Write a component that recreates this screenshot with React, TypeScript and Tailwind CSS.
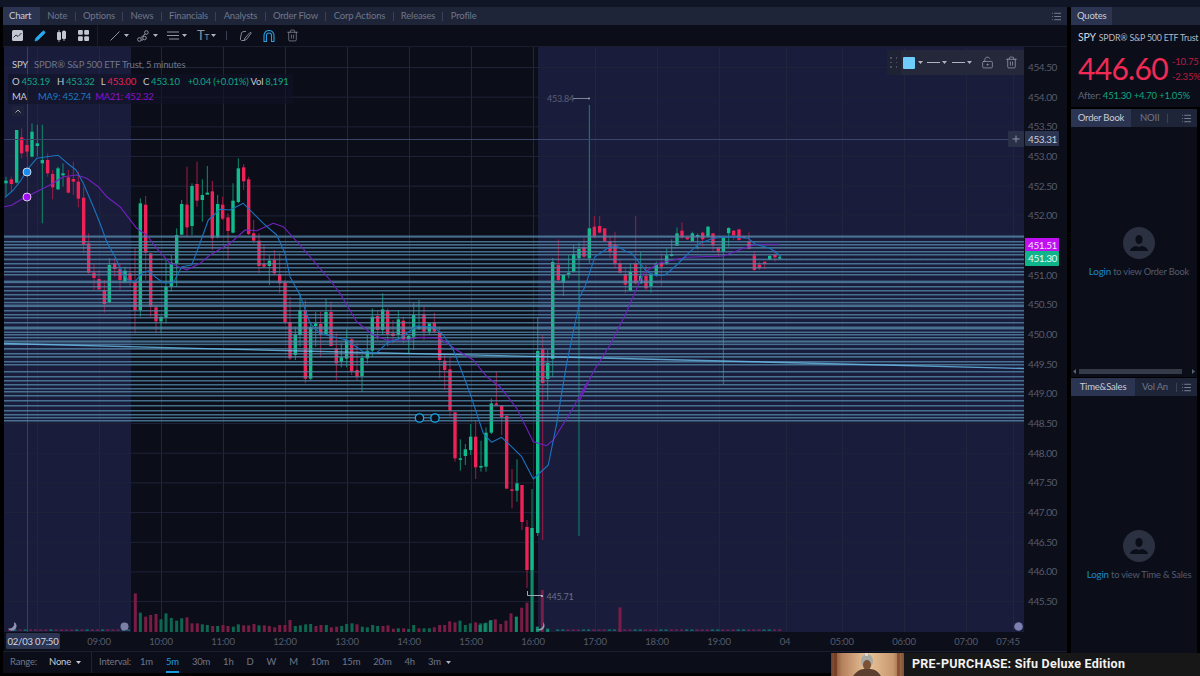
import React from "react";
import { LockKeyholeOpen, Trash2, List, Pencil } from "lucide-react";

type C = [number, number, number, number, number, "g" | "r"];

const z5: C[] = [
  [18,170,182,190,230,"g"],[34,170,178,192,215,"r"],[50,30,30,188,190,"g"],[65,25,52,100,115,"r"],[81,60,75,95,110,"r"],[96,10,35,110,112,"g"],[112,14,70,78,110,"g"],[127,14,120,130,310,"g"],[143,100,120,160,170,"r"],[158,150,162,202,238,"r"],[174,140,145,208,210,"g"],[189,130,160,166,200,"g"],[205,150,172,218,220,"r"],[220,125,177,185,225,"r"],[235,155,185,236,262,"r"],[251,200,233,372,400,"r"],[266,340,370,458,462,"r"],[282,432,458,474,510,"r"],[297,450,477,508,510,"r"],[313,480,510,552,578,"r"],[328,415,435,546,550,"g"],[344,415,430,447,470,"r"],[360,430,447,480,510,"r"],[375,440,452,485,490,"g"],[390,440,460,480,500,"r"],[405,385,485,570,640,"r"],[421,235,250,570,590,"g"],[437,228,254,398,480,"r"],[452,400,400,560,590,"r"],[468,555,562,604,640,"r"],[483,590,590,604,640,"g"],[498,420,500,592,610,"g"],[514,405,428,500,515,"g"],[530,325,345,430,500,"g"],[545,240,252,344,345,"g"],[561,140,254,322,350,"r"],[576,190,198,318,345,"g"],[591,125,192,242,260,"r"],[607,178,225,240,305,"g"],[622,138,218,224,220,"g"],[637,183,214,355,390,"r"],[653,225,252,352,355,"g"],[668,230,254,296,300,"r"],[684,280,292,333,420,"r"],[699,190,242,338,340,"g"],[715,115,145,246,250,"g"],[731,132,142,184,210,"r"],[746,170,178,342,345,"r"],[761,300,340,362,370,"r"],[777,340,362,438,460,"r"],[792,375,432,440,445,"r"],[808,405,422,438,495,"g"],[823,390,420,460,465,"r"],[839,400,462,490,520,"r"],[855,480,487,607,610,"r"],[870,530,606,715,720,"r"],[886,620,644,705,720,"g"],
];
const z6: C[] = [
  [0,40,90,165,200,"g"],[16,60,90,296,310,"r"],[32,125,142,296,300,"g"],[47,95,130,138,200,"g"],[62,95,132,164,232,"r"],[78,55,96,165,165,"g"],[93,65,96,198,200,"r"],[109,160,205,250,300,"r"],[124,190,232,245,262,"g"],[140,148,180,236,262,"g"],[155,175,178,275,285,"r"],[171,190,270,290,300,"r"],[186,225,234,288,335,"g"],[202,165,212,235,250,"g"],[217,85,110,212,230,"g"],[233,90,108,150,180,"r"],[248,40,88,150,165,"g"],[263,85,92,163,200,"r"],[279,120,160,168,190,"r"],[295,90,118,164,180,"g"],[310,110,122,178,190,"r"],[326,165,168,178,220,"g"],[341,70,105,170,210,"g"],[357,60,140,146,150,"g"],[372,80,102,155,180,"r"],[388,130,130,155,165,"g"],[403,98,128,155,160,"r"],[419,140,158,240,295,"r"],[434,225,242,270,330,"r"],[450,232,268,392,410,"r"],[465,395,397,535,545,"r"],[481,478,535,539,572,"g"],[496,492,508,528,555,"g"],[512,432,470,510,525,"g"],[527,420,470,562,597,"r"],[543,482,558,561,575,"g"],[558,442,458,560,575,"g"],[574,355,370,458,462,"g"],[589,275,370,376,376,"r"],[605,375,377,411,465,"r"],[620,405,408,626,626,"r"],[636,567,628,632,685,"r"],[651,538,610,632,665,"g"],
];
const z7: C[] = [
  [85,118,195,240,250,"r"],[100,222,225,248,288,"g"],[116,165,218,222,235,"g"],[131,135,162,215,218,"g"],[147,128,147,175,1008,"g"],[162,115,142,170,175,"r"],[178,-285,85,175,190,"g"],[193,48,80,108,115,"r"],[209,48,78,98,100,"r"],[224,85,85,123,125,"r"],[240,110,125,155,175,"r"],[255,95,133,190,205,"r"],[270,180,190,218,220,"r"],[286,200,222,254,280,"r"],[301,190,216,272,275,"g"],[317,48,190,250,255,"r"],[332,155,228,250,250,"g"],[348,195,228,265,270,"r"],[363,220,224,258,278,"g"],[379,185,190,225,230,"g"],[394,160,188,200,258,"r"],[410,145,166,190,195,"g"],[425,118,162,168,170,"g"],[441,82,100,137,138,"g"],[456,67,92,112,118,"r"],[472,110,112,118,120,"r"],[487,95,100,124,125,"g"],[503,100,105,110,148,"g"],[518,95,98,118,140,"r"],[534,78,80,110,112,"g"],[549,100,100,136,155,"r"],[565,140,142,155,170,"r"],[580,110,112,155,553,"g"],[596,82,84,100,140,"g"],[611,90,92,106,120,"r"],[627,88,88,120,122,"r"],[642,108,109,113,116,"r"],[657,95,125,146,148,"r"],[673,155,166,210,212,"r"],[688,185,194,205,210,"r"],[704,185,185,192,208,"r"],[719,165,168,178,180,"g"],[735,150,165,172,185,"r"],[750,165,170,176,178,"g"],
];
const extra: C[] = [
  [522,485,485,522,530,"r"],[527,520,527,570,588,"r"],[532,489,528,570,572,"g"],[537.7,317,351,533,536,"g"],[542.7,335,349,383,540,"r"],[547.7,350,363,379,400,"g"],[552.7,258,262,359,377,"g"],
];
const candles: readonly (readonly [number, number, number, number, number, "g" | "r"])[] = [
  ...z5.map(c => [c[0]/3, 120+c[1]/3, 120+c[2]/3, 120+c[3]/3, 120+c[4]/3, c[5]] as const),
  ...z6.map(c => [300+c[0]/3, 280+c[1]/3, 280+c[2]/3, 280+c[3]/3, 280+c[4]/3, c[5]] as const),
  ...extra,
  ...z7.map(c => [530+c[0]/3, 200+c[1]/3, 200+c[2]/3, 200+c[3]/3, 200+c[4]/3, c[5]] as const),
];

const poly = (ox: number, oy: number, p: number[][]) => p.map(([x, y]) => `${(ox + x / 3).toFixed(1)},${(oy + y / 3).toFixed(1)}`);
const ma9 = [
  ...poly(0,120,[[15,232],[40,210],[60,185],[85,145],[110,115],[140,110],[175,106],[200,128],[228,150],[250,190],[280,260],[300,310],[320,365],[345,410],[365,455],[385,480],[405,485],[425,460],[445,452],[465,470],[490,488],[520,488],[545,440],[575,435],[600,370],[625,300],[660,268],[690,270],[730,250],[760,280],[790,310],[830,345],[855,400],[870,470]]),
  ...poly(300,280,[[0,45],[30,130],[60,160],[100,170],[140,180],[190,215],[230,218],[260,190],[300,175],[350,138],[400,140],[430,165],[460,210],[480,260],[510,340],[530,400],[550,460],[575,487],[605,472],[640,505],[665,530],[700,597],[745,555],[770,430],[800,250],[840,60]]),
  ...poly(530,200,[[147,295],[165,260],[195,170],[240,140],[265,140],[290,155],[305,160],[350,215],[380,227],[405,225],[440,195],[480,155],[510,130],[550,115],[600,110],[655,115],[675,132],[720,145],[752,168]]),
].join(" ");
const ma21 = [
  ...poly(0,120,[[12,260],[35,256],[70,235],[110,215],[150,195],[190,170],[230,165],[260,175],[295,200],[320,230],[360,260],[410,325],[440,345],[470,385],[510,430],[560,450],[600,430],[630,405],[690,370],[735,330],[770,332],[820,310],[850,320],[900,375]]),
  ...poly(300,280,[[90,0],[120,40],[170,125],[220,165],[260,180],[320,180],[360,172],[420,175],[470,210],[520,240],[560,290],[600,320],[650,385],[700,485],[740,497],[760,480],[810,400],[860,310]]),
  ...poly(530,200,[[150,600],[190,515],[240,435],[290,335],[340,220],[385,190],[470,172],[580,168],[640,145],[680,133],[750,133]]),
].join(" ");

const hLines: [number, number][] = [[235.5,2.2],[241,1.5],[244,1.5],[247,1.7],[251,1.5],[254,1.5],[258.6,1.7],[263,1.5],[267,1.5],[271,1.5],[274,1.5],[280.6,2.6],[286,1.5],[290,1.5],[294,1.5],[298,1.5],[301.8,1.5],[304.5,2.6],[310,1.5],[314,1.5],[317,1.5],[322,1.5],[326.5,3],[331.5,1.5],[334,1.5],[337,1.5],[340.4,2.2],[343.6,1.5],[348,1.7],[353,1.5],[356,1.7],[361,1.5],[364,1.5],[371,1.5],[376,1.5],[380,1.5],[384,1.5],[388,1.5],[391,1.5],[395,1.5],[400,1.5],[405,1.5],[410,1.5],[414,1.5],[417,1.5],[420,1.5]];

const vol1: [number, number, "g" | "r"][] = [[406,10,"r"],[421,68,"g"],[437,80,"r"],[452,75,"r"],[468,72,"r"],[483,88,"g"],[498,70,"g"],[514,84,"g"],[530,92,"g"],[545,85,"g"],[561,82,"r"],[576,100,"r"],[592,100,"r"],[607,103,"g"],[622,105,"g"],[638,108,"r"],[653,108,"g"],[669,105,"r"],[684,108,"r"],[700,110,"g"],[715,103,"g"],[731,106,"r"],[746,106,"r"],[762,102,"r"],[777,106,"g"],[793,106,"r"],[808,108,"r"],[824,112,"r"],[839,105,"r"],[855,105,"r"],[870,90,"r"],[886,108,"g"],[901,106,"g"],[917,103,"g"],[932,102,"g"],[948,108,"r"],[963,105,"r"],[979,105,"g"],[994,112,"r"],[1010,110,"r"],[1025,108,"g"],[1040,102,"g"],[1056,100,"g"],[1071,103,"r"],[1087,110,"g"],[1102,112,"g"],[1118,105,"g"],[1133,108,"g"],[1149,108,"r"],[1164,106,"r"],[1180,116,"r"],[1195,115,"g"],[1211,115,"r"],[1226,117,"g"],[1241,105,"g"],[1257,115,"r"],[1272,115,"g"],[1288,115,"g"],[1303,112,"r"],[1319,105,"r"],[1334,105,"r"],[1349,94,"r"],[1365,97,"r"],[1380,92,"g"],[1396,105,"g"],[1411,100,"g"],[1427,97,"r"],[1442,100,"g"],[1458,98,"g"],[1473,90,"g"]];
const vol2: [number, number, "g" | "r"][] = [[0,165,"g"],[15,160,"g"],[31,152,"g"],[46,148,"r"],[62,162,"r"],[78,152,"r"],[93,130,"r"],[109,140,"g"],[125,113,"r"],[141,98,"r"],[156,0,"g"],[172,170,"g"],[187,60,"r"],[203,176,"g"],[420,112,"r"]];

const gridX = [37,99,161,223,285,347,409,471,533,595,657,719,786,842,904,966,1013];
const prices = ["454.50","454.00","453.50","453.00","452.50","452.00","451.50","451.00","450.50","450.00","449.50","449.00","448.50","448.00","447.50","447.00","446.50","446.00","445.50"];
const times: [string, number][] = [["09:00",99],["10:00",161],["11:00",223],["12:00",285],["13:00",347],["14:00",409],["15:00",471],["16:00",533],["17:00",595],["18:00",657],["19:00",719],["04",785],["05:00",842],["06:00",904],["07:00",966],["07:45",1008]];

const dashes = (a: number, b: number) => {
  const out: number[] = [];
  for (let x = a; x < b; x += 5.16) out.push(x);
  return out;
};

function Caret({ c = "#aeb3c0" }: { c?: string }) {
  return (
    <svg width="5" height="3" viewBox="0 0 5 3" className="shrink-0">
      <polygon points="0,0 5,0 2.5,3" fill={c} />
    </svg>
  );
}

function Chart() {
  return (
    <svg width={1063} height={604} viewBox="4 47 1063 604" className="block shrink-0">
      <rect x="4" y="47" width="1063" height="604" fill="#0c0f1a" />
      <rect x="4" y="47" width="1020" height="585" fill="#0b0e19" />
      <rect x="4" y="47" width="127" height="585" fill="#191c3a" />
      <rect x="538" y="47" width="486" height="585" fill="#191c3a" />
      {gridX.map(x => <rect key={x} x={x} y="47" width="1" height="585" fill="#22253d" />)}
      {prices.map((_, i) => <rect key={i} x="4" y={67 + i * 29.67} width="1020" height="1" fill="#1f2238" />)}
      <rect x="27" y="47" width="1" height="585" fill="#3b4059" />

      {vol1.map(([z, t, k], i) => <rect key={i} x={z / 3 - 1.5} y={590 + t / 3} width="3" height={42 - t / 3} fill={k === "g" ? "#0e6650" : "#7a1c46"} />)}
      {vol2.map(([z, t, k], i) => <rect key={i} x={480 + z / 3 - 1.5} y={570 + t / 3} width="3" height={62 - t / 3} fill={k === "g" ? "#118a6c" : "#7a1c46"} />)}
      {dashes(8, 131).map((x, i) => <rect key={i} x={x} y="629.5" width="3.4" height="1.3" fill={i % 5 === 3 || i % 7 === 1 ? "#0f7a66" : "#7d2250"} />)}
      {dashes(556, 782).map((x, i) => <rect key={i} x={x} y="629.5" width="3.4" height="1.3" fill={i % 5 < 2 ? "#0f7a66" : "#7d2250"} />)}

      {candles.map((c, i) => {
        const [x, wt, bt, bb, wb, k] = c;
        const g = k === "g";
        return (
          <g key={i}>
            <rect x={x - 0.5} y={wt} width="1" height={wb - wt} fill={g ? "#0f8a6c" : "#a01c46"} />
            <rect x={x - 1.7} y={bt} width="3.4" height={Math.max(bb - bt, 1.5)} fill={g ? "#12bb8b" : "#ee2256"} />
          </g>
        );
      })}

      {hLines.map(([y, h]) => <rect key={y} x="4" y={y} width="1020" height={h} fill="#5588aa" opacity="0.78" />)}
      <polyline points="4,343.5 300,351 600,358 1024,368.5" fill="none" stroke="#6cc0ee" strokeWidth="1.4" opacity="0.8" />

      <polyline points={ma21} fill="none" stroke="#7320c0" strokeWidth="1.1" strokeLinejoin="round" />
      <polyline points={ma9} fill="none" stroke="#1a74c0" strokeWidth="1.1" strokeLinejoin="round" />

      <rect x="4" y="139" width="1020" height="1" fill="#39466a" />
      <line x1="781" y1="257.5" x2="1024" y2="257.5" stroke="#10141f" strokeWidth="1" strokeDasharray="1 2" />

      <circle cx="27" cy="172" r="4" fill="#1a8cf0" stroke="#c9d6ea" strokeWidth="1" />
      <circle cx="27" cy="197" r="4" fill="#a010f0" stroke="#d6c9ea" strokeWidth="1" />
      <circle cx="419.5" cy="418" r="4.2" fill="#0b0e19" stroke="#19a8e8" strokeWidth="1.3" />
      <circle cx="435" cy="418" r="4.2" fill="#0b0e19" stroke="#19a8e8" strokeWidth="1.3" />

      <text x="547" y="102" className="text-[9px] fill-[#5b5f78]">453.84</text>
      <path d="M573 98.5H589" stroke="#7b8098" strokeWidth="1" fill="none" />
      <circle cx="589" cy="98.5" r="1" fill="#9aa0b5" />
      <path d="M527.5 591V595.5H542" stroke="#a0a5ba" strokeWidth="1" fill="none" />
      <circle cx="542" cy="596" r="1" fill="#c0c5d5" />
      <text x="546.5" y="600" className="text-[9px] fill-[#6a6f88]">445.71</text>

      <path d="M14 622a4.6 4.6 0 1 1-6 6.4a5 5 0 0 0 6-6.4z" fill="#8e92b3" />
      <circle cx="124.5" cy="626.500" r="4" fill="#7c80a8" />
      <path d="M543 622a5 5 0 1 1-7 7.2a5.6 5.6 0 0 0 7-7.2z" fill="#8ea2b3" />
      <circle cx="1018.5" cy="626.500" r="4.3" fill="#7c80b0" />

      {prices.map((p, i) => <text key={p} x="1028" y={71 + i * 29.67} className="text-[10px] tracking-[-0.4px] fill-[#565b6c]">{p}</text>)}

      <rect x="1008" y="131" width="16" height="16" rx="1" fill="#2a3048" />
      <path d="M1016 135.5V142.5M1012.5 139H1019.5" stroke="#8c92a6" strokeWidth="1" />
      <rect x="1025" y="131" width="34" height="15" rx="1" fill="#2b3450" />
      <text x="1028" y="142.500" className="text-[10px] tracking-[-0.4px] fill-[#c9cdd8]">453.31</text>
      <rect x="1025" y="238" width="34" height="13.5" fill="#c010f2" />
      <text x="1028" y="248.500" className="text-[10px] tracking-[-0.4px] fill-[#f4e0fa]">451.51</text>
      <rect x="1025" y="251" width="34" height="15" rx="1" fill="#10b48a" />
      <text x="1028" y="262" className="text-[10px] tracking-[-0.4px] fill-[#e6f8f2]">451.30</text>

      <rect x="6" y="633" width="54" height="16" rx="1.5" fill="#2b3450" />
      <text x="33" y="644.500" textAnchor="middle" className="text-[9.5px] fill-[#d5d8e0]">02/03 07:50</text>
      {times.map(([t, x]) => <text key={t} x={x} y="644.500" textAnchor="middle" className="text-[9.5px] fill-[#565b6c]">{t}</text>)}
    </svg>
  );
}

const tabs = ["Note", "Options", "News", "Financials", "Analysts", "Order Flow", "Corp Actions", "Releases", "Profile"];
const intervals = ["1m", "5m", "30m", "1h", "D", "W", "M", "10m", "15m", "20m", "4h", "3m"];

function Toolbar() {
  return (
    <div className="h-[22px] flex items-center bg-[#0b0e19] border-b border-[#191d2e] pl-[9px]">
      <svg width="11" height="11" viewBox="0 0 11 11" className="shrink-0">
        <rect width="11" height="11" rx="1.5" fill="#c2c6d0" />
        <path d="M1.5 7.5L4 5l2 1.5L9.5 3" stroke="#2b3040" fill="none" />
      </svg>
      <Pencil size={12} className="ml-[11px] text-[#27a9f0]" fill="#27a9f0" strokeWidth={1.5} />
      <svg width="11" height="12" viewBox="0 0 11 12" className="ml-[10px]">
        <rect x="1" y="2" width="4" height="8" rx="1" fill="#c2c6d0" />
        <rect x="6" y="1" width="4" height="8" rx="1" fill="#c2c6d0" />
        <path d="M3 0V12M8 0V11" stroke="#c2c6d0" strokeWidth="0.8" />
      </svg>
      <svg width="11" height="11" viewBox="0 0 11 11" className="ml-[11px]">
        <rect width="4.8" height="4.8" rx="1" fill="#c2c6d0" />
        <rect x="6.2" width="4.8" height="4.8" rx="1" fill="#c2c6d0" />
        <rect y="6.2" width="4.8" height="4.8" rx="1" fill="#c2c6d0" />
        <rect x="6.2" y="6.2" width="4.8" height="4.8" rx="1" fill="#c2c6d0" />
      </svg>
      <div className="ml-[8px] w-px h-[22px] bg-[#191d2e]" />
      <svg width="10" height="10" viewBox="0 0 10 10" className="ml-[12px]"><path d="M0.5 9.5L9.5 0.5" stroke="#8f94a3" strokeWidth="1" /></svg>
      <div className="ml-[4px]"><Caret /></div>
      <svg width="12" height="12" viewBox="0 0 12 12" className="ml-[8px]">
        <circle cx="2.4" cy="9.5" r="1.8" fill="none" stroke="#8f94a3" />
        <circle cx="9.4" cy="2.5" r="1.8" fill="none" stroke="#8f94a3" />
        <circle cx="7.5" cy="8" r="1.8" fill="none" stroke="#8f94a3" />
        <path d="M3.500 8L8 4M4 10H6" stroke="#8f94a3" />
      </svg>
      <div className="ml-[4px]"><Caret /></div>
      <svg width="12" height="9" viewBox="0 0 12 9" className="ml-[9px]">
        <path d="M0 1H12M0 4.500H12M2 8H12" stroke="#8f94a3" strokeWidth="1" />
      </svg>
      <div className="ml-[3px]"><Caret /></div>
      <span className="ml-[10px] w-[10px] text-[13px] leading-none text-[#8f94a3] whitespace-nowrap">T<span className="text-[8px]">T</span></span>
      <div className="ml-[4px]"><Caret /></div>
      <div className="ml-[10px] w-px h-[9px] bg-[#3b4050]" />
      <svg width="13" height="12" viewBox="0 0 13 12" className="ml-[12px]">
        <path d="M5 10.500H2.500Q1 10 1.500 8L2.500 3Q3 1.500 5 1.500H7M5 10.500L6 8L11 2.500Q12 2 12.300 3L7.500 9.500Z" fill="none" stroke="#8f94a3" strokeWidth="0.9" />
      </svg>
      <svg width="12" height="12" viewBox="0 0 12 12" className="ml-[11px]">
        <path d="M1 11.500V5.500a5 5 0 0 1 10 0V11.500H8.500V5.500a2.500 2.500 0 0 0-5 0V11.500Z" fill="none" stroke="#2b9be0" strokeWidth="1.1" />
      </svg>
      <Trash2 size={13} className="ml-[11px] text-[#8c90a0]" strokeWidth={1.3} />
    </div>
  );
}

function Avatar() {
  return (
    <div className="w-[32px] h-[32px] rounded-full bg-[#2b3141] flex items-center justify-center">
      <svg width="20" height="20" viewBox="0 0 20 20">
        <ellipse cx="10" cy="6.500" rx="3.600" ry="4.600" fill="#0b0e19" />
        <path d="M1 18c0-3 4-4.500 6-5l3 1 3-1c2 .5 6 2 6 5z" fill="#0b0e19" />
      </svg>
    </div>
  );
}

export default function App() {
  return (
    <div className="relative w-[1200px] h-[676px] overflow-hidden bg-[#000000] font-['Lato',sans-serif] tracking-[-0.2px] flex flex-col">
      <div className="h-[7px] shrink-0 bg-[#111627]" />
      <div className="flex flex-1 min-h-0">
        <div className="w-[1067px] flex flex-col pl-[3px] bg-[#000000]">
          <div className="h-[18px] shrink-0 flex items-center bg-[#1e2539] text-[9.5px] text-[#6f7689]">
            <div className="h-full flex items-center px-[6px] bg-[#2b3450] text-[#c9cdd8] w-[37px]">Chart</div>
            {tabs.map((t, i) => (
              <React.Fragment key={t}>
                {i > 0 && <div className="w-px h-[9px] bg-[#3a4158]" />}
                <div className="px-[7.35px]">{t}</div>
              </React.Fragment>
            ))}
            <List size={11} className="ml-auto mr-[5px] text-[#7f8699]" />
          </div>
          <Toolbar />
          <div className="relative h-[604px] ml-[1px] shrink-0">
            <Chart />
            <div className="absolute left-[4px] top-[8px] flex flex-col text-[9.5px] leading-[15px]">
              <div className="h-[19px] flex items-center pl-[4px] text-[#6f7689]">
                <span className="text-[#c5c9d3] w-[22px]">SPY</span>SPDR® S&amp;P 500 ETF Trust, 5 minutes
              </div>
              <div className="h-[15px] flex items-center pl-[4px] pr-[4px] bg-[#11132699] text-[#c5c9d3] whitespace-nowrap">
                <span>O</span><span className="ml-[2px] text-[#12a583]">453.19</span>
                <span className="ml-[7px]">H</span><span className="ml-[2px] text-[#12a583]">453.32</span>
                <span className="ml-[6px]">L</span><span className="ml-[2px] text-[#e5244f]">453.00</span>
                <span className="ml-[7px]">C</span><span className="ml-[2px] text-[#12a583]">453.10</span>
                <span className="ml-[8px] text-[#12a583]">+0.04 (+0.01%)</span>
                <span className="ml-[2px]">Vol</span><span className="ml-[2px] text-[#12a583]">8,191</span>
              </div>
              <div className="h-[15px] flex items-center pl-[4px] bg-[#11132699] text-[#c5c9d3] whitespace-nowrap">
                <span className="w-[26px]">MA</span><span className="text-[#1a78c6]">MA9: 452.74</span><span className="ml-[4px] text-[#8a12cc]">MA21: 452.32</span>
              </div>
              <div className="mt-[2px] ml-[4px] w-[12px] h-[10px] bg-[#1f2238] rounded-[1px] flex items-center justify-center">
                <svg width="6" height="4" viewBox="0 0 6 4"><path d="M0.500 3.500L3 1L5.500 3.500" stroke="#a0a5b5" fill="none" /></svg>
              </div>
            </div>
            <div className="absolute left-[883px] top-[3px] w-[137px] h-[25px] bg-[#25283a] flex items-center rounded-[1px]">
              <div className="w-[14px] h-full bg-[#1f2232] grid grid-cols-2 gap-[3px] px-[3px] py-[7px]">
                {[0,1,2,3,4,5].map(i => <div key={i} className="w-[1.5px] h-[1.5px] bg-[#4d5266]" />)}
              </div>
              <div className="ml-[2px] w-[12px] h-[12px] bg-[#6fcdfc] rounded-[1px]" />
              <div className="ml-[3px]"><Caret /></div>
              <div className="ml-[4px] w-[13px] h-px bg-[#aeb3c0]" />
              <div className="ml-[2px]"><Caret /></div>
              <div className="ml-[5px] w-[13px] h-px bg-[#aeb3c0]" />
              <div className="ml-[2px]"><Caret /></div>
              <LockKeyholeOpen size={13} className="ml-[9px] text-[#a0a5b5]" strokeWidth={1.3} />
              <Trash2 size={13} className="ml-[11px] text-[#a0a5b5]" strokeWidth={1.3} />
            </div>
          </div>
          <div className="h-[22px] shrink-0 flex items-center bg-[#0b0e19] border-t border-[#1a1e2e] text-[9.5px] text-[#6f7689]">
            <span className="ml-[7px] w-[26px]">Range:</span>
            <span className="ml-[13px] w-[21px] text-[#c5c9d3]">None</span>
            <div className="ml-[6px]"><Caret c="#c5c9d3" /></div>
            <div className="ml-[10px] w-px h-full bg-[#1f2334]" />
            <span className="ml-[7px] w-[33px] whitespace-nowrap">Interval:</span>
            <div className="ml-[8px] flex items-center gap-[13px] h-full">
              {intervals.map(t => (
                <span key={t} className={t === "5m" ? "relative text-[#1b9be0]" : ""}>
                  {t}
                  {t === "5m" && <span className="absolute left-0 right-0 top-[16px] h-[2px] bg-[#1b9be0]" />}
                </span>
              ))}
            </div>
            <div className="ml-[5px]"><Caret c="#aeb3c0" /></div>
          </div>
          <div className="flex-1" />
        </div>
        <div className="w-[3px] shrink-0" />
        <div className="w-[127px] shrink-0 flex flex-col gap-[2px] pl-[1px] text-[9.5px]">
          <div className="bg-[#0b0e19] -mr-[3px]">
            <div className="h-[18px] bg-[#1e2539] flex items-center">
              <div className="h-full px-[6px] flex items-center bg-[#2b3450] text-[#c9cdd8]">Quotes</div>
            </div>
            <div className="h-[82px] pl-[7px] pt-[5px] overflow-hidden">
              <div className="flex items-center h-[15px] whitespace-nowrap">
                <span className="text-[10.5px] text-[#d0d4dd] mr-[3px]">SPY</span>
                <span className="text-[#b5b9c4] text-[8.8px]">SPDR® S&amp;P 500 ETF Trust</span>
              </div>
              <div className="flex items-start mt-[6px] h-[36px]">
                <span className="text-[30px] leading-[34px] tracking-[-0.7px] text-[#f02a55]">446.60</span>
                <div className="ml-[4px] text-[9.5px] leading-[15px] text-[#b91d45] pt-[3px]">
                  <div>-10.75</div>
                  <div>-2.35%</div>
                </div>
              </div>
              <div className="text-[#5f6577] mt-[2px] whitespace-nowrap">After: <span className="text-[#0fa580]">451.30 +4.70 +1.05%</span></div>
            </div>
          </div>
          <div className="h-[268px] bg-[#0b0e19] flex flex-col">
            <div className="h-[18px] bg-[#1e2539] flex items-center text-[#6f7689] shrink-0">
              <div className="h-full w-[60px] flex items-center justify-center bg-[#2b3450] text-[#c9cdd8]">Order Book</div>
              <span className="ml-[9px]">NOII</span>
              <div className="ml-[8px] w-px h-[9px] bg-[#3a4158]" />
              <List size={11} className="ml-auto mr-[5px] text-[#7f8699]" />
            </div>
            <div className="flex-1 flex flex-col items-center pt-[100px] pl-[10px]">
              <Avatar />
              <div className="mt-[6px] whitespace-nowrap leading-[13px] text-[9.3px]"><span className="text-[#1b88c8] text-[9.8px]">Login</span><span className="text-[#555b6d]"> to view Order Book</span></div>
            </div>
            <div className="h-[7px] mb-[2px] flex items-center px-[2px] gap-[2px]">
              <svg width="3" height="5" viewBox="0 0 3 5"><polygon points="3,0 3,5 0,2.500" fill="#5b6070" /></svg>
              <div className="ml-[1px] w-[103px] h-[5px] bg-[#343a48]" />
              <svg width="3" height="5" viewBox="0 0 3 5" className="ml-auto"><polygon points="0,0 0,5 3,2.500" fill="#5b6070" /></svg>
            </div>
          </div>
          <div className="flex-1 bg-[#0b0e19] flex flex-col min-h-0 -mt-[1px]">
            <div className="h-[18px] bg-[#1e2539] flex items-center text-[#6f7689] shrink-0">
              <div className="h-full w-[64px] flex items-center justify-center bg-[#2b3450] text-[#c9cdd8]">Time&amp;Sales</div>
              <span className="ml-[7px]">Vol An</span>
              <div className="ml-[8px] w-px h-[9px] bg-[#3a4158]" />
              <List size={11} className="ml-auto mr-[5px] text-[#7f8699]" />
            </div>
            <div className="flex flex-col items-center pt-[134px] pl-[10px]">
              <Avatar />
              <div className="mt-[6px] whitespace-nowrap leading-[13px] text-[9.3px]"><span className="text-[#1b88c8] text-[9.8px]">Login</span><span className="text-[#555b6d]"> to view Time &amp; Sales</span></div>
            </div>
          </div>
        </div>
      </div>
      <div className="absolute left-[831px] top-[653px] w-[369px] h-[23px] bg-[#171717] flex items-center overflow-hidden">
        <svg width="73" height="23" viewBox="0 0 73 23" className="shrink-0">
          <defs>
            <linearGradient id="adbg" x1="0" x2="1" y1="0" y2="0">
              <stop offset="0" stopColor="#6d4026" />
              <stop offset="0.15" stopColor="#b5815c" />
              <stop offset="0.5" stopColor="#eac49a" />
              <stop offset="0.85" stopColor="#c8986e" />
              <stop offset="1" stopColor="#7d5034" />
            </linearGradient>
          </defs>
          <rect width="73" height="23" fill="url(#adbg)" />
          <rect x="3" width="3" height="23" fill="#7b3f28" />
          <rect x="66" width="3" height="23" fill="#8a5233" />
          <ellipse cx="36" cy="8" rx="6" ry="7" fill="#a8a8a2" />
          <rect x="34" y="0" width="3" height="3" fill="#d8d8d0" />
          <ellipse cx="36" cy="12" rx="4" ry="5" fill="#7a5236" />
          <path d="M22 23Q28 15 34 16H38Q45 15 50 23Z" fill="#5b4030" />
        </svg>
        <span className="ml-[8px] text-[12.5px] font-bold tracking-[0.25px] text-[#f2f2f2] font-['Roboto',sans-serif] whitespace-nowrap">PRE-PURCHASE: Sifu Deluxe Edition</span>
      </div>
    </div>
  );
}
